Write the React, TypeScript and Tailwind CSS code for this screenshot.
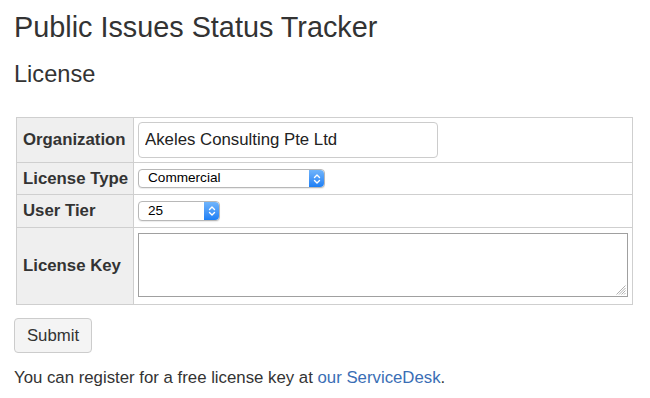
function Stepper() {
    return (
        <span className="flex w-[15px] items-center justify-center rounded-r-[4px] bg-gradient-to-b from-[#6fb4fb] to-[#1b7ff5]">
            <svg width="8" height="12" viewBox="0 0 8 12" fill="none" stroke="white" strokeWidth="1.4" strokeLinecap="round" strokeLinejoin="round">
                <path d="M1.5 4.5 L4 2 L6.5 4.5" />
                <path d="M1.5 7.5 L4 10 L6.5 7.5" />
            </svg>
        </span>
    );
}

function FakeSelect({ value, width, height }: { value: string; width: string; height: string }) {
    return (
        <div className={`flex ${width} ${height} rounded-[4px] border border-[#b8b8b8] bg-white shadow-[0_1px_1px_rgba(0,0,0,0.08)]`}>
            <span className="flex flex-1 items-center pl-[9px] text-[13.6px] text-black">{value}</span>
            <Stepper />
        </div>
    );
}

export default function App() {
    const label = "border border-[#cfcfcf] bg-[#efefef] pl-[6px] pr-[4px] text-left align-middle text-[16.8px] font-bold text-[#333]";
    const cell = "border border-[#cfcfcf] px-[4px] align-middle";

    return (
        <div className="px-[14px] pt-[11px] text-[#333]" style={{ fontFamily: '"Liberation Sans", Arial, sans-serif' }}>
            <h1 className="text-[28.8px] leading-[32px] font-normal">Public Issues Status Tracker</h1>
            <h2 className="mt-[18px] text-[23.6px] leading-[26px] font-normal">License</h2>

            <table className="mt-[30px] ml-[2px] w-[617px] border-collapse">
                <tbody>
                    <tr className="h-[45px]">
                        <th className={`${label} w-[117px]`}>Organization</th>
                        <td className={cell}>
                            <input
                                readOnly
                                value="Akeles Consulting Pte Ltd"
                                className="h-[36px] w-[300px] rounded-[4px] border border-[#cccccc] px-[6px] text-[16.8px] text-[#222] outline-none"
                            />
                        </td>
                    </tr>
                    <tr className="h-[32px]">
                        <th className={label}>License Type</th>
                        <td className={cell}>
                            <FakeSelect value="Commercial" width="w-[187px]" height="h-[19px]" />
                        </td>
                    </tr>
                    <tr className="h-[33px]">
                        <th className={label}>User Tier</th>
                        <td className={cell}>
                            <FakeSelect value="25" width="w-[82px]" height="h-[20px]" />
                        </td>
                    </tr>
                    <tr className="h-[77px]">
                        <th className={label}>License Key</th>
                        <td className={cell}>
                            <div className="relative mb-[3px] h-[64px] w-full border border-[#a0a0a0] bg-white">
                                <svg className="absolute right-[1px] bottom-[1px]" width="11" height="11" viewBox="0 0 11 11" stroke="#b0b0b0" strokeWidth="1">
                                    <path d="M10.5 1.5 L1.5 10.5" />
                                    <path d="M10.5 4 L4 10.5" />
                                    <path d="M10.5 6.5 L6.5 10.5" />
                                    <path d="M10.5 9 L9 10.5" />
                                </svg>
                            </div>
                        </td>
                    </tr>
                </tbody>
            </table>

            <button className="mt-[13px] h-[35px] w-[78px] rounded-[4px] border border-[#cccccc] bg-[#f4f4f4] text-[16.8px] text-[#333]">
                Submit
            </button>

            <p className="mt-[13px] text-[16.8px] leading-[24px]">
                You can register for a free license key at <a href="#" className="text-[#3a6eb5]">our ServiceDesk</a>.
            </p>
        </div>
    );
}
